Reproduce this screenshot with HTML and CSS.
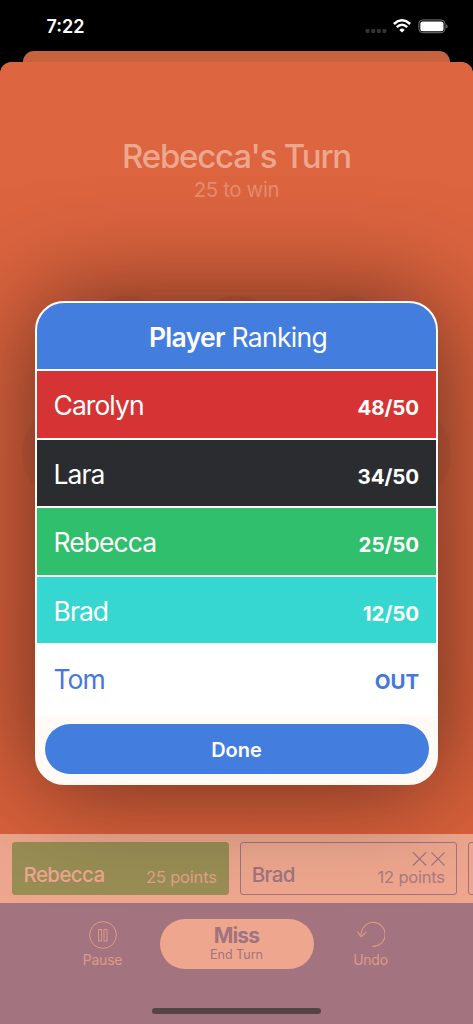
FILE: index.html
```
<!DOCTYPE html>
<html lang="en">
<head>
    <meta charset="UTF-8">
    <title>Player Ranking</title>
    <meta name="viewport" content="width=device-width, initial-scale=1">
    <link rel="stylesheet" href="styles.css">
</head>
<body>
    <div class="status-bar">
        <span class="clock">7:22</span>
        <div class="status-icons">
            <svg width="22" height="6" viewBox="0 0 22 6" fill="#333">
                <rect x="0.5" y="1" width="4" height="4" rx="1.3"/>
                <rect x="6.2" y="1" width="4" height="4" rx="1.3"/>
                <rect x="11.8" y="1" width="4" height="4" rx="1.3"/>
                <rect x="17.4" y="1" width="4" height="4" rx="1.3"/>
            </svg>
            <svg class="wifi" width="18" height="14" viewBox="0 0 18 14" fill="none" stroke="#fff" stroke-width="2.5">
                <path d="M0.9 5Q9-2.4 17.1 5"/>
                <path d="M3.8 8.2Q9 3.2 14.2 8.2"/>
                <path d="M9 13.6L6.3 10.9Q9 8.3 11.7 10.9Z" fill="#fff" stroke="none"/>
            </svg>
            <svg class="battery" width="30" height="15" viewBox="0 0 30 15">
                <rect x="0.8" y="0.9" width="26.2" height="12.8" rx="4" fill="none" stroke="#777" stroke-width="1"/>
                <rect x="2.3" y="2.4" width="23.2" height="9.8" rx="2.5" fill="#fff"/>
                <path d="M28.2 5.2q1.4.7 1.4 2.2t-1.4 2.2z" fill="#777"/>
            </svg>
        </div>
    </div>
    <div class="back-sheet"></div>
    <div class="sheet">
        <div class="board">
            <h1>Rebecca's Turn</h1>
            <div class="to-win">25 to win</div>
            <div class="pins">
                <i></i><i></i><i></i>
            </div>
            <div class="pins wide">
                <i></i><i></i><i></i><i></i>
            </div>
        </div>
        <div class="players">
            <div class="player active">
                <span class="name">Rebecca</span>
                <span class="points">25 points</span>
            </div>
            <div class="player">
                <span class="name">Brad</span>
                <div class="tally">
                    <svg width="34" height="15" viewBox="0 0 34 15" stroke="#a0737f" stroke-width="1.1">
                        <path d="M2 0.3l13.2 13.2M15.2 0.3L2 13.5M20.4 0.3l13.2 13.2M33.6 0.3L20.4 13.5"/>
                    </svg>
                    <span class="points">12 points</span>
                </div>
            </div>
            <div class="player"></div>
        </div>
        <div class="toolbar">
            <div class="actions">
                <div class="action">
                    <svg width="28" height="28" viewBox="0 0 28 28" fill="none" stroke="#dc9b88" stroke-width="1">
                        <circle cx="14" cy="14" r="13.4"/>
                        <rect x="9.6" y="8.5" width="3" height="11.5"/>
                        <rect x="15" y="8.5" width="3" height="11.5"/>
                    </svg>
                    <span>Pause</span>
                </div>
                <div class="miss">
                    <b>Miss</b>
                    <span>End Turn</span>
                </div>
                <div class="action">
                    <svg width="28" height="28" viewBox="0 0 28 28" fill="none" stroke="#dc9b88" stroke-width="1.1">
                        <path d="M4.2 14.5A12 12 0 1 1 15.5 25.4"/>
                        <path d="M0.4 10.6l3.7 5.2 5-4.8"/>
                    </svg>
                    <span>Undo</span>
                </div>
            </div>
            <div class="home-bar"></div>
        </div>
    </div>

    <div class="dialog">
        <h2><b>Player</b> Ranking</h2>
        <ul class="ranking">
            <li class="red"><span>Carolyn</span><b>48/50</b></li>
            <li class="black"><span>Lara</span><b>34/50</b></li>
            <li class="green"><span>Rebecca</span><b>25/50</b></li>
            <li class="cyan"><span>Brad</span><b>12/50</b></li>
            <li class="out"><span>Tom</span><b>OUT</b></li>
        </ul>
        <div class="dialog-footer">
            <button type="button">Done</button>
        </div>
    </div>
</body>
</html>
```
FILE: styles.css
```
* { box-sizing: border-box; }
body {
    font-family: Inter, "Liberation Sans", sans-serif;
    background: #000;
    margin: 0;
    width: 473px;
    height: 1024px;
    overflow: hidden;
    position: relative;
}
.status-bar {
    height: 50.5px;
    padding: 0 25px 0 46.5px;
    display: flex;
    justify-content: space-between;
    align-items: center;
    color: #fff;
}
.clock {
    font-size: 18px;
    font-weight: 600;
    line-height: 22px;
    margin-top: 3px;
}
.status-icons { display: flex; align-items: center; }
.status-icons svg:first-child { margin: 11px 6px 0 0; }
.wifi { margin-top: 1px; }
.battery { margin: 2px 0 0 7px; }
.back-sheet {
    height: 11.5px;
    margin: 0 23px;
    background: #c6623e;
    border-radius: 11px 11px 0 0;
}
.sheet {
    height: 962px;
    background: #dd6540;
    border-radius: 12px 12px 0 0;
    display: flex;
    flex-direction: column;
    overflow: hidden;
}
.board {
    height: 772px;
    padding-top: 73px;
    text-align: center;
    background: linear-gradient(#dd6540, #d8603b);
}
h1 {
    margin: 0;
    font-size: 33px;
    font-weight: 500;
    line-height: 43px;
    letter-spacing: -1.2px;
    color: #eda78e;
}
.to-win {
    font-size: 20.5px;
    font-weight: 400;
    line-height: 23px;
    letter-spacing: -.4px;
    color: #e58c6f;
}
.pins {
    display: flex;
    justify-content: center;
    gap: 12px;
    margin-top: 95px;
}
.pins.wide { gap: 9.5px; margin-top: 8px; }
.pins i {
    flex: none;
    width: 100px;
    height: 100px;
    border-radius: 50%;
    background: #d15f3d;
}
.players {
    height: 68.5px;
    background: #eea78e;
    padding: 8px 0 8px 12px;
    display: flex;
    gap: 11.5px;
    color: #a0737f;
}
.player {
    flex: none;
    width: 216.7px;
    border: 1px solid #a0737f;
    border-radius: 3px;
    padding: 0 11px 7px 10.5px;
    display: flex;
    justify-content: space-between;
    align-items: flex-end;
}
.player.active {
    background: #998e54;
    border-color: #998e54;
    color: #eda78e;
}
.name {
    font-size: 20.5px;
    font-weight: 500;
    line-height: 24px;
    letter-spacing: -.6px;
}
.points {
    font-size: 16.5px;
    line-height: 20px;
    letter-spacing: -.2px;
    opacity: .85;
}
.tally {
    display: flex;
    flex-direction: column;
    align-items: flex-end;
}
.toolbar {
    flex: 1;
    background: #a3737f;
    padding: 16px 72px 0;
}
.actions { display: flex; justify-content: space-between; }
.action {
    width: 61px;
    display: flex;
    flex-direction: column;
    align-items: center;
    padding-top: 2px;
    font-size: 14px;
    line-height: 18px;
    letter-spacing: -.25px;
    color: #dc9b88;
}
.action span { margin-top: 2px; }
.miss {
    width: 154px;
    height: 50px;
    border-radius: 25px;
    background: #eea78e;
    color: #a0737f;
    text-align: center;
    padding-top: 5px;
}
.miss b {
    display: block;
    font-size: 21px;
    line-height: 24px;
    letter-spacing: -.8px;
}
.miss span { display: block; font-size: 12.5px; line-height: 14px; }
.home-bar {
    width: 169px;
    height: 6px;
    border-radius: 3px;
    background: #55434a;
    margin: 39.5px auto 0;
}

/* ranking dialog over the board */
.dialog {
    position: absolute;
    left: 35px;
    top: 301px;
    width: 403px;
    height: 484px;
    border: 2.3px solid #fffaf5;
    border-radius: 29px;
    background: #fffaf5;
    overflow: hidden;
    box-shadow: 0 0 105px rgba(0, 0, 0, .56);
}
.dialog h2 {
    margin: 0;
    height: 66px;
    padding-left: 3px;
    background: #437dde;
    color: #fff;
    font-size: 26.5px;
    font-weight: 400;
    line-height: 68px;
    letter-spacing: -.7px;
    text-align: center;
}
.dialog h2 b { font-weight: 600; }
.ranking { list-style: none; margin: 0; padding: 0; }
.ranking li {
    height: 68.5px;
    border-top: 2.5px solid #fffaf5;
    padding: 0 17px;
    display: flex;
    justify-content: space-between;
    align-items: baseline;
    line-height: 68px;
    color: #fff;
}
.ranking span {
    font-size: 26.5px;
    font-weight: 400;
    letter-spacing: -.95px;
    margin-left: -.5px;
}
.ranking b { font-size: 20.5px; font-weight: 700; letter-spacing: -.1px; }
.red { background: #d63434; }
.black { background: #2b2c30; }
.green { background: #30bf6c; }
.cyan { background: #36d7d1; }
.ranking .out {
    background: #fff;
    height: 73px;
    border-color: #fff;
    color: #4577dc;
}
.dialog-footer { padding: 8px 7.5px; }
.dialog-footer button {
    display: block;
    width: 100%;
    height: 50px;
    border: none;
    border-radius: 25px;
    background: #437dde;
    color: #fff;
    font: 600 20px Inter, "Liberation Sans", sans-serif;
    padding-top: 3px;
}
```
